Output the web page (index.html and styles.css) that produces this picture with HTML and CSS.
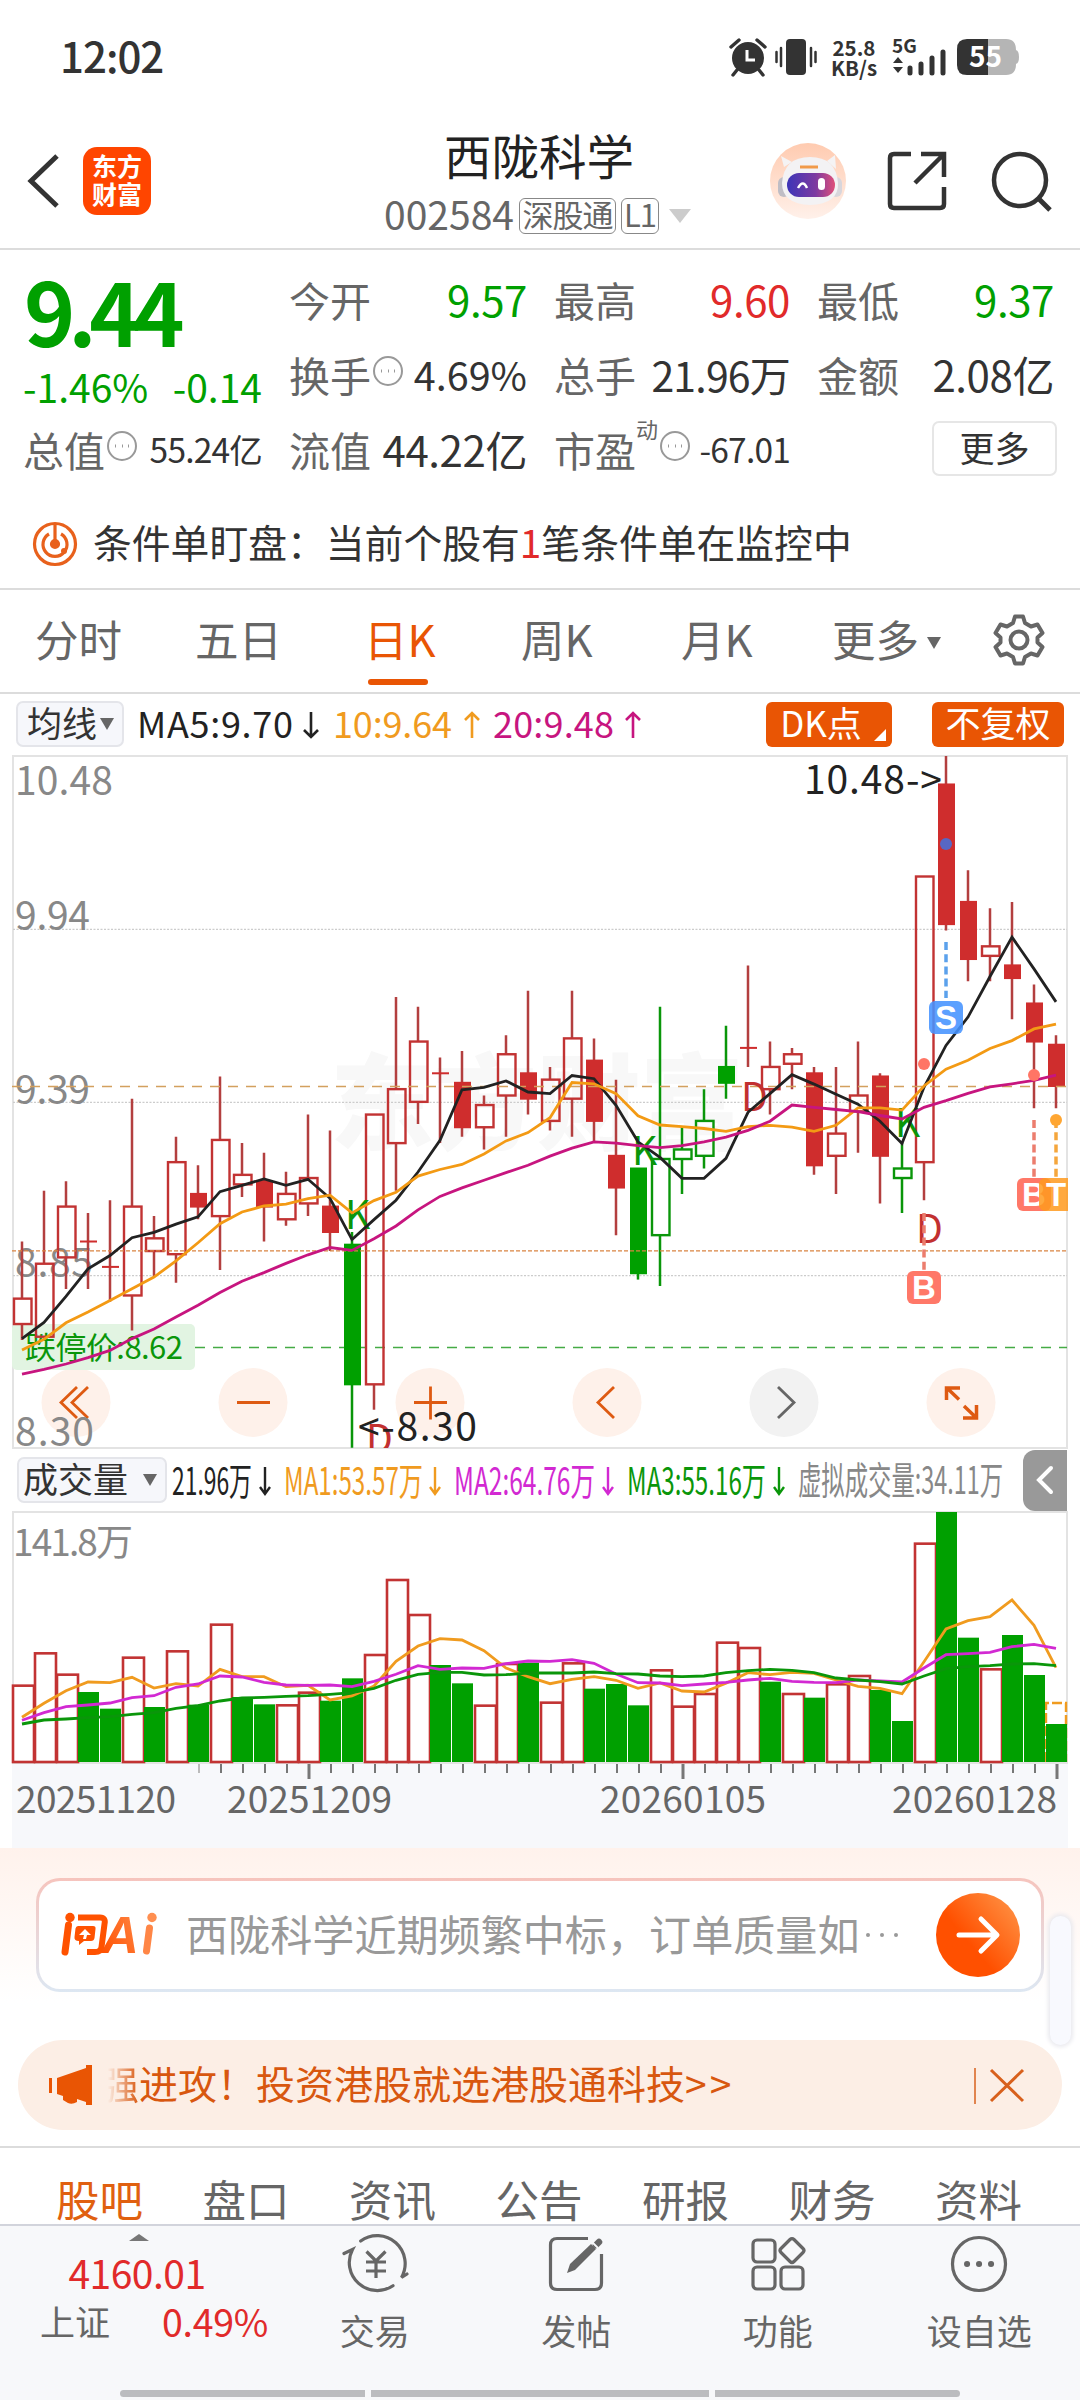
FILE: index.html
```html
<!DOCTYPE html>
<html lang="zh-CN">
<head>
<meta charset="utf-8">
<title>西陇科学 002584</title>
<link rel="stylesheet" href="styles.css">
</head>
<body>
<div class="phone">
  <header class="status">
    <span class="clock">12:02</span>
    <div class="status-icons">
      <svg width="40" height="38" viewBox="0 0 40 38"><circle cx="20" cy="20" r="16" fill="#333"/><path d="M3 9 L11 2 M37 9 L29 2 M9 32 L5 37 M31 32 L35 37" stroke="#333" stroke-width="3.4" stroke-linecap="round"/><path d="M19 12v10h8" fill="none" stroke="#fff" stroke-width="3"/></svg>
      <svg width="44" height="38" viewBox="0 0 44 38"><rect x="12" y="1" width="20" height="36" rx="4" fill="#333"/><path d="M7 10v18M2.500 14v10M37 10v18M41.500 14v10" stroke="#333" stroke-width="2.500" stroke-linecap="round"/></svg>
      <span class="speed">25.8<br>KB/s</span>
      <svg width="56" height="40" viewBox="0 0 56 40"><text x="0" y="16" class="net">5G</text><path d="M1 26l5-6 5 6zM1 30l5 6 5-6z" fill="#333"/><path d="M18 36v-5M29 36v-9M40 36v-15M51 36v-21" stroke="#333" stroke-width="5" stroke-linecap="round"/></svg>
      <svg width="64" height="38" viewBox="0 0 64 38"><path d="M11 1H32V37H11Q1 37 1 27V11Q1 1 11 1z" fill="#333"/><path d="M32 1H50Q60 1 60 12Q63 13 63 19T60 26Q60 37 50 37H32z" fill="#b5b5b5"/><text x="13" y="29" class="battery">55</text></svg>
    </div>
  </header>

  <div class="header">
    <div class="header-side">
      <svg width="34" height="56" viewBox="0 0 34 56"><path d="M31 3L5 28l26 25" fill="none" stroke="#333" stroke-width="5"/></svg>
      <div class="logo">东方<br>财富</div>
    </div>
    <div class="header-mid">
      <h1>西陇科学</h1>
      <div class="code"><span>002584</span><b class="tag tag-wide">深股通</b><b class="tag">L1</b><i class="tri tri-light"></i></div>
    </div>
    <div class="header-side header-actions">
      <svg class="robot" width="76" height="76" viewBox="0 0 76 76">
        <defs><linearGradient id="skin" x2="0" y2="1"><stop stop-color="#ffcbb0"/><stop offset="1" stop-color="#fff1ea"/></linearGradient><linearGradient id="visor"><stop stop-color="#3d35b8"/><stop offset=".6" stop-color="#7d3aa0"/><stop offset="1" stop-color="#e0507a"/></linearGradient></defs>
        <circle cx="38" cy="38" r="38" fill="url(#skin)"/>
        <path d="M14 24L11 13l11 6zM57 18l8-6 1 14z" fill="#f5f3f4"/>
        <rect x="8" y="34" width="12" height="20" rx="6" fill="#bfbdc5"/><rect x="60" y="34" width="12" height="20" rx="6" fill="#d8d6dc"/>
        <path d="M12 40Q14 14 40 14T68 40Q69 61 40 62Q12 61 12 40z" fill="#f3f2f4"/>
        <rect x="17" y="30" width="48" height="24" rx="12" fill="url(#visor)"/>
        <path d="M30 24h18" stroke="#f19a4a" stroke-width="3"/>
        <path d="M28 45q5-9 9 0" fill="none" stroke="#fff" stroke-width="2.500"/><rect x="48" y="35" width="7" height="12" rx="3.500" fill="#fff"/>
      </svg>
      <svg width="62" height="62" viewBox="0 0 62 62"><path d="M25 4H8Q4 4 4 8V54Q4 58 8 58H54Q58 58 58 54V37M35 4H58V27M57 5L29 33" fill="none" stroke="#333" stroke-width="4.500"/></svg>
      <svg width="62" height="62" viewBox="0 0 62 62"><circle cx="30" cy="30" r="26" fill="none" stroke="#333" stroke-width="4.500"/><path d="M48 48L60 60" stroke="#333" stroke-width="5"/></svg>
    </div>
  </div>

  <section class="quote">
    <div class="last green">
      <div class="price">9.44</div>
      <div class="change"><span>-1.46%</span><span>-0.14</span></div>
    </div>
    <div class="cell"><label>今开</label><b class="green">9.57</b></div>
    <div class="cell"><label>最高</label><b class="red">9.60</b></div>
    <div class="cell"><label>最低</label><b class="green">9.37</b></div>
    <div class="cell"><label>换手</label><svg class="dots" viewBox="0 0 32 32"><circle cx="16" cy="16" r="14"/><path d="M9 16h1M16 16h1M22 16h1"/></svg><b class="mid">4.69%</b></div>
    <div class="cell"><label>总手</label><b class="volume">21.96万</b></div>
    <div class="cell"><label>金额</label><b>2.08亿</b></div>
    <div class="cell"><label>总值</label><svg class="dots" viewBox="0 0 32 32"><circle cx="16" cy="16" r="14"/><path d="M9 16h1M16 16h1M22 16h1"/></svg><b class="small">55.24亿</b></div>
    <div class="cell"><label>流值</label><b>44.22亿</b></div>
    <div class="cell"><label>市盈</label><sup>动</sup><svg class="dots" viewBox="0 0 32 32"><circle cx="16" cy="16" r="14"/><path d="M9 16h1M16 16h1M22 16h1"/></svg><b class="small">-67.01</b></div>
    <div class="cell cell-more"><span class="more">更多</span></div>
  </section>

  <div class="notice">
    <svg width="46" height="46" viewBox="0 0 46 46" fill="none" stroke="#e8611c" stroke-width="3.200"><circle cx="23" cy="23" r="20.500"/><path d="M17 13A12 12 0 1 0 29 13"/><path d="M23 3v18"/><circle cx="23" cy="23" r="3.500" fill="#e8611c"/><circle cx="32" cy="30" r="3" fill="#e8611c" stroke="none"/></svg>
    <p>条件单盯盘：当前个股有<em>1</em>笔条件单在监控中</p>
  </div>

  <nav class="periods">
    <span>分时</span><span>五日</span><span class="on">日K</span><span>周K</span><span>月K</span><span class="has-tri">更多<i class="tri tri-small"></i></span>
    <svg width="54" height="54" viewBox="0 0 54 54" fill="none" stroke="#666" stroke-width="4" stroke-linejoin="round"><path d="M23 3.500h8l2 6.500 6 3.500 6.500-2 5 8.500-5 4.500v5l5 4.500-5 8.500-6.500-2-6 3.500-2 6.500h-8l-2-6.500-6-3.500-6.500 2-5-8.500 5-4.500v-5l-5-4.500 5-8.500 6.500 2 6-3.500z"/><circle cx="27" cy="27" r="8.500"/></svg>
  </nav>

  <div class="legend">
    <span class="pill">均线<i class="tri tri-small"></i></span>
    <svg class="legend-text" width="520" height="60" viewBox="130 694 520 60">
      <text x="137" y="738" textLength="156" fill="#222">MA5:9.70</text>
      <text x="333" y="738" textLength="119" fill="#f09b1f">10:9.64</text>
      <text x="493" y="738" textLength="121" fill="#c7157f">20:9.48</text>
      <g fill="none" stroke-width="2.600"><path stroke="#222" d="M311 712v25M304 730l7 7 7-7"/><path stroke="#f09b1f" d="M472 738v-25M465 720l7-7 7 7"/><path stroke="#c7157f" d="M633 738v-25M626 720l7-7 7 7"/></g>
    </svg>
    <span class="btn btn-dk">DK点<i class="corner"></i></span>
    <span class="btn btn-adj">不复权</span>
  </div>

  <svg class="chart" id="price" width="1080" height="695" viewBox="0 754 1080 695">
    <defs><clipPath id="frame"><rect x="12" y="755" width="1056" height="693"/></clipPath></defs>
    <text class="watermark" x="330" y="1142" textLength="414">东方财富</text>
    <path d="M13 1448V756H1067V1448z" fill="none" stroke="#e3e3e3" stroke-width="2"/>
    <path d="M13 929.300H1067M13 1102.300H1067M13 1275.700H1067" stroke="#ccc" stroke-width="1.200" stroke-dasharray="2 1.500"/>
    <path d="M12 1347.500H1067" stroke="#45ab45" stroke-width="1.500" stroke-dasharray="10 8" stroke-dashoffset="-3"/>
    <g class="axis">
      <text x="15" y="795" textLength="98">10.48</text><text x="15" y="930" textLength="75">9.94</text><text x="15" y="1104" textLength="75">9.39</text><text x="15" y="1277" textLength="78">8.85</text>
    </g>
    <g id="buttons">
      <g fill="#fef1ea"><circle cx="76" cy="1402.500" r="34.500"/><circle cx="253" cy="1402.500" r="34.500"/><circle cx="430" cy="1402.500" r="34.500"/><circle cx="607" cy="1402.500" r="34.500"/><circle cx="784" cy="1402.500" r="34.500" fill="#f2f2f2"/><circle cx="961" cy="1402.500" r="34.500"/></g>
      <g fill="none" stroke="#de5a12" stroke-width="2.800">
        <path d="M77 1387L61 1402.500l16 15.500M88 1387l-16 15.500 16 15.500M237 1402.500h33M414 1402.500h33M430.500 1386.500v33M614 1387l-16 15.500 16 15.500"/>
        <path d="M778 1387l16 15.500-16 15.500" stroke="#666"/>
        <path stroke-width="3.500" d="M946.500 1400V1388H960M947 1388l12 11.500M964 1406l12 11.500M976.500 1405V1418H963"/>
      </g>
    </g>
    <rect x="12" y="1324" width="183" height="46" rx="5" fill="#e2f4e2"/>
    <text x="25" y="1359" class="limit" textLength="158">跌停价:8.62</text>
    <g class="axis"><text x="15" y="1446" textLength="79">8.30</text></g>
    <g id="candles" clip-path="url(#frame)"></g>
    <path d="M12 1086.500H1067" stroke="#d3a05e" stroke-width="1.500" stroke-dasharray="10 8"/>
    <path d="M12 1250.800H1067" stroke="#d98442" stroke-width="1.300" stroke-dasharray="4 2"/>
    <g class="signal" clip-path="url(#frame)">
      <text class="g" x="345" y="1229">K</text><text class="g" x="632" y="1165">K</text><text class="g" x="895" y="1137">K</text>
      <text class="r" x="366" y="1453">D</text><text class="r" x="741" y="1111">D</text><text class="r" x="916" y="1243">D</text>
    </g>
    <g id="averages"></g>
    <g class="note"><text x="804" y="794" textLength="138">10.48-&gt;</text><text x="358" y="1441" textLength="119">&lt;-8.30</text></g>
    <g stroke-width="3.500" stroke-dasharray="8 4.200">
      <path d="M946 942v56" stroke="#5ba1ec"/><path d="M924 1213v57M1034 1120v57" stroke="#ec7d6e"/><path d="M1056 1120v57" stroke="#f5a63c"/>
    </g>
    <circle cx="946" cy="844" r="6" fill="#5767c4"/><circle cx="924" cy="1064" r="6" fill="#ff7565"/><circle cx="1034" cy="1075" r="6" fill="#ff7565"/><circle cx="1056" cy="1120" r="6" fill="#ffa632"/>
    <g class="flags" clip-path="url(#frame)">
      <rect x="929" y="1001" width="34" height="33" rx="6" fill="#4693ff" fill-opacity=".88"/><text x="946" y="1029">S</text>
      <rect x="907" y="1271" width="34" height="33" rx="6" fill="#ff7868"/><text x="924" y="1299">B</text>
      <rect x="1017" y="1178" width="34" height="33" rx="6" fill="#ff7868"/><text x="1034" y="1206">B</text>
      <rect x="1039" y="1178" width="34" height="33" rx="6" fill="#ff9a1e" fill-opacity=".85"/><text x="1056" y="1206">T</text>
    </g>
  </svg>

  <div class="legend legend-vol">
    <span class="pill pill-vol">成交量<i class="tri tri-small"></i></span>
    <svg class="legend-text" width="850" height="60" viewBox="168 1450 850 60">
      <g font-size="38"><text x="172" y="1495" textLength="80" lengthAdjust="spacingAndGlyphs" fill="#222">21.96万</text>
      <text x="284" y="1495" textLength="139" lengthAdjust="spacingAndGlyphs" fill="#f09b1f">MA1:53.57万</text>
      <text x="454" y="1495" textLength="141" lengthAdjust="spacingAndGlyphs" fill="#d229d2">MA2:64.76万</text>
      <text x="627" y="1495" textLength="139" lengthAdjust="spacingAndGlyphs" fill="#0a960a">MA3:55.16万</text>
      <text x="798" y="1494" textLength="205" lengthAdjust="spacingAndGlyphs" fill="#888">虚拟成交量:34.11万</text></g>
      <g fill="none" stroke-width="2.400"><path stroke="#222" d="M265 1467v27M260 1487l5 7 5-7"/><path stroke="#f09b1f" d="M435 1467v27M430 1487l5 7 5-7"/><path stroke="#d229d2" d="M608 1467v27M603 1487l5 7 5-7"/><path stroke="#0a960a" d="M779 1467v27M774 1487l5 7 5-7"/></g>
    </svg>
    <span class="fold"><svg width="20" height="30" viewBox="0 0 20 30"><path d="M16 3L4 15l12 12" fill="none" stroke="#fff" stroke-width="4" stroke-linecap="round"/></svg></span>
  </div>

  <svg class="chart" width="1080" height="337" viewBox="0 1511 1080 337">
    <rect x="12" y="1763" width="1056" height="85" fill="#f7f8fb"/>
    <path d="M13 1763V1512H1067V1763z" fill="#fff" stroke="#e3e3e3" stroke-width="2"/>
    <text class="vol-max" x="13" y="1556" textLength="120">141.8万</text>
    <g id="volume"></g>
    <g class="dates"><text x="16" y="1813" textLength="160">20251120</text><text x="227" y="1813" textLength="165">20251209</text><text x="600" y="1813" textLength="166">20260105</text><text x="892" y="1813" textLength="165">20260128</text></g>
  </svg>

  <section class="ai">
    <div class="ask">
      <svg width="100" height="50" viewBox="0 0 100 50"><defs><linearGradient id="brand" gradientUnits="userSpaceOnUse" x1="40" y1="40" x2="96" y2="10"><stop stop-color="#ff5000"/><stop offset="1" stop-color="#ff9355"/></linearGradient></defs><g fill="none" stroke="#ff5200" stroke-width="6"><path d="M8.500 15L5 42" stroke-width="7" stroke-linecap="round"/><path d="M18 7.500H40Q46 7.500 44.500 14L41.500 37Q41 42 35 42H27"/></g><circle cx="10" cy="7.500" r="4.700" fill="#ff5200"/><path d="M18 16H33Q36 16 35.500 19L34.500 28Q34 31 31 31H24L19 35V31Q14 31 14.500 27L15.500 18.500Q16 16 18 16z" fill="#ff5200"/><path d="M25 19l6 6h-4l-1 4h-3l1-4h-5z" fill="#fff"/><text class="brand-text" x="42" y="43" fill="url(#brand)">A</text><path d="M89.500 18L86.500 41" stroke="#ff8646" stroke-width="7" stroke-linecap="round"/><circle cx="92" cy="7.500" r="4.700" fill="#ff8f50"/></svg>
      <p>西陇科学近期频繁中标，订单质量如</p>
      <i class="ellipsis"></i>
      <span class="go"><svg width="44" height="44" viewBox="0 0 44 44"><path d="M3 22H40M25 6L41 22 25 38" fill="none" stroke="#fff" stroke-width="5" stroke-linecap="round" stroke-linejoin="round"/></svg></span>
    </div>
    <div class="scroll-thumb"></div>
  </section>

  <div class="banner">
    <svg width="46" height="42" viewBox="0 0 46 42" fill="#e95504"><path d="M1 14h3v15H1zM9 14L38 4V1h6v40h-6v-3l-9-3v3q-5 3-9 1l-5-3v-4l-6-2z"/></svg>
    <p><span class="faded">强</span>进攻！投资港股就选港股通科技<span class="arrows">&gt;&gt;</span></p>
    <svg class="close" width="52" height="40" viewBox="0 0 52 40" fill="none" stroke="#d8601c"><path d="M2 3v36" stroke-width="1.500"/><path d="M18 5l32 31M50 5L18 36" stroke-width="3"/></svg>
  </div>

  <nav class="sections"><span class="on">股吧</span><span>盘口</span><span>资讯</span><span>公告</span><span>研报</span><span>财务</span><span>资料</span></nav>

  <footer class="bottom">
    <div class="index"><i class="up"></i><b>4160.01</b><div><label>上证</label><em>0.49%</em></div></div>
    <div class="tool"><svg viewBox="0 0 66 60" fill="none" stroke="#666" stroke-width="3.200" stroke-linecap="round"><path d="M18.700 8A28 28 0 0 1 59.500 44.500L65 41M51 52.700A28 28 0 0 1 10.500 16.500L2 20.500"/><path d="M24.500 18.500l9.500 9.500 9.500-9.500M24 29h20M24 38h20M34 29v16" stroke-linecap="butt"/></svg><span>交易</span></div>
    <div class="tool"><svg viewBox="0 0 66 60" fill="none" stroke="#666" stroke-width="3.200"><path d="M45 5.500H14Q7.500 5.500 7.500 12V50Q7.500 56.500 14 56.500H52Q58.500 56.500 58.500 50V21"/><path d="M24 40l3-9L48 11l5 5-21 21z" fill="#666" stroke="none"/><path d="M53 12l3-3" stroke-width="6.500" stroke-linecap="round"/><path d="M49 9l6 6" stroke="#f7f8fa" stroke-width="1.800"/></svg><span>发帖</span></div>
    <div class="tool"><svg viewBox="0 0 66 60" fill="none" stroke="#666" stroke-width="3.200"><rect x="8" y="7" width="22" height="22" rx="4"/><rect x="8" y="34" width="22" height="22" rx="4"/><rect x="36" y="34" width="22" height="22" rx="4"/><path d="M45 6.500q2-2 4 0l9 9q2 2 0 4l-9 9q-2 2-4 0l-9-9q-2-2 0-4z"/></svg><span>功能</span></div>
    <div class="tool"><svg viewBox="0 0 66 60" fill="none" stroke="#666" stroke-width="3.200"><circle cx="33" cy="31" r="26.500"/><path d="M21 31h.1M33 31h.1M45 31h.1" stroke-width="6" stroke-linecap="round"/></svg><span>设自选</span></div>
    <div class="home"><i></i><i></i><i></i></div>
  </footer>
</div>
<script src="chart.js"></script>
</body>
</html>
```
FILE: styles.css
```css
* { box-sizing: border-box; }
body { margin: 0; background: #fff; font-family: "Noto Sans CJK SC", sans-serif; color: #333; line-height: 1; }
svg { display: block; flex: none; overflow: visible; }
h1, p { margin: 0; font-weight: 400; }
b, em, i { font-weight: 400; font-style: normal; }
.phone { width: 1080px; height: 2400px; overflow: hidden; display: flex; flex-direction: column; }
.phone > * { flex: none; }
.green { color: #00a000; }
.red { color: #e12a2a; }

.tri { display: inline-block; border-style: solid; border-color: #666 transparent transparent; border-width: 12px 7.5px 0; }
.tri-light { border-color: #ccc transparent transparent; border-width: 14px 11px 0; margin-left: 10px; }

.status { height: 114px; padding: 0 60px; display: flex; align-items: center; justify-content: space-between; }
.clock { font-size: 42px; font-weight: 500; letter-spacing: -1px; padding-bottom: 4px; }
.status-icons { display: flex; align-items: center; }
.status-icons svg:nth-child(2) { margin-left: 6px; }
.speed { width: 54px; margin: 0 11px 0 9px; font-size: 20.5px; line-height: 20px; font-weight: 700; text-align: center; }
.net { font-size: 19px; font-weight: 700; fill: #333; }
.battery { font-size: 28px; font-weight: 700; fill: #fff; }
.status-icons svg:last-child { margin-left: 8px; }

.header { height: 136px; border-bottom: 2px solid #dcdcdc; display: flex; justify-content: space-between; padding: 0 28px 0 26px; }
.header-side { width: 290px; display: flex; align-items: center; }
.header-actions { justify-content: flex-end; gap: 40px; }
.header-actions svg:nth-child(2) { margin-right: 2px; }
.logo { width: 68px; height: 68px; margin-left: 23px; border-radius: 14px; background: #ff4500; color: #fff; font-size: 25px; font-weight: 700; line-height: 28px; padding-top: 4px; text-align: center; }
.header-mid { padding-top: 15px; display: flex; flex-direction: column; align-items: center; }
h1 { font-size: 47.5px; line-height: 52px; color: #222; }
.code { margin-top: 17px; display: flex; align-items: center; font-size: 39px; height: 36px; color: #666; margin-left: -3px; }
.code > span { margin-top: -5px; }
.tag { height: 36px; border: 1.5px solid #888; border-radius: 6px; font-size: 31px; line-height: 30px; width: 38px; text-align: center; margin-left: 5px; letter-spacing: -1px; white-space: nowrap; }
.tag-wide { width: 97px; }

.quote { height: 240px; padding: 11px 26px 0 24px; display: grid; grid-template-columns: 238px 237px 235px 236px; grid-auto-rows: 75px; column-gap: 28px; }
.last { grid-row: span 2; padding-left: 2px; }
.price { font-size: 87px; font-weight: 700; line-height: 90px; letter-spacing: -7.2px; margin: 3px 0 0 -2px; }
.change { display: flex; justify-content: space-between; font-size: 39px; line-height: 50px; margin: 7px 0 0 -3px; }
.cell { display: flex; align-items: center; white-space: nowrap; }
.cell label { font-size: 41px; color: #666; line-height: 70px; margin-left: -1px; }
.cell b { margin-left: auto; font-size: 42px; line-height: 70px; letter-spacing: -0.4px; }
.cell .mid { font-size: 39.5px; letter-spacing: 0; }
.cell .volume { font-size: 41px; letter-spacing: -0.8px; }
.cell .small { font-size: 33.5px; letter-spacing: -0.8px; }
.dots { width: 32px; height: 32px; margin: -6px 0 0 1px; fill: none; stroke: #999; stroke-width: 2; }
.dots path { stroke-width: 3; }
.cell sup { font-size: 22px; color: #666; align-self: flex-start; margin-top: 6px; line-height: 22px; }
.cell-more { justify-content: flex-end; margin-right: -3px; }
.more { width: 125px; height: 55px; border: 2px solid #e6e6e6; border-radius: 7px; font-size: 35px; line-height: 47px; text-align: center; }

.notice { height: 98px; padding: 9px 31px 0 32px; display: flex; align-items: center; gap: 15px; font-size: 38.8px; }
.notice p { margin-top: -5px; }
.notice em { color: #e12a2a; }

.periods { height: 106px; border-top: 2px solid #dcdcdc; border-bottom: 2px solid #dcdcdc; display: grid; grid-template-columns: 160px 169px 157px 160px 151px 160px 54px; align-items: center; padding-left: 35px; font-size: 43.5px; color: #666; }
.periods span { position: relative; line-height: 102px; height: 102px; margin-top: -4px; }
.periods svg { margin-top: -2px; }
.periods .on { color: #e95504; }
.periods .on::after { content: ""; position: absolute; left: 4px; bottom: 5px; width: 60px; height: 6px; border-radius: 3px; background: #e95504; }
.has-tri .tri { margin-left: 8px; vertical-align: 8px; }

.legend { height: 60px; display: flex; align-items: center; padding: 0 16px; }
.pill { width: 108px; height: 46px; background: #f6f7fb; border: 2px solid #e4e5ea; border-radius: 7px; font-size: 35px; line-height: 38px; padding-left: 9px; white-space: nowrap; }
.pill .tri { margin-left: 3px; vertical-align: 7px; }
.legend-text { margin-left: 6px; font-size: 36px; }
.btn { height: 45px; border-radius: 6px; background: #e95504; color: #fff; font-size: 35px; line-height: 39px; text-align: center; }
.btn-dk { position: relative; width: 126px; margin-left: 116px; padding-right: 16px; }
.btn-adj { width: 132px; margin-left: 40px; }
.corner { position: absolute; right: 6px; bottom: 6px; border-style: solid; border-width: 0 0 12px 12px; border-color: transparent transparent #fff; }

.axis text, .note text { font-size: 39px; fill: #888; }
.note text { fill: #222; }
.watermark { font-size: 104px; font-weight: 900; fill: #f8f8f8; }
.limit { font-size: 31px; fill: #0a960a; }
.signal text { font-size: 39px; }
.signal .g { fill: #0a960a; }
.signal .r { fill: #c23030; }
.flags text { font-family: "Liberation Sans", sans-serif; font-size: 33px; font-weight: 700; fill: #fff; text-anchor: middle; }
.vol-max { font-size: 37px; fill: #888; }
.dates text { font-size: 37px; fill: #666; }

.legend-vol { height: 62px; padding: 0 0 0 17px; }
.pill-vol { width: 150px; padding-left: 4px; }
.pill-vol .tri { margin-left: 15px; }
.legend-vol .legend-text { margin-left: 1px; }
.fold { width: 44px; height: 61px; margin-left: 5px; border-radius: 12px 0 0 12px; background: #999; display: flex; align-items: center; justify-content: center; }

.ai { position: relative; height: 192px; padding: 30px 36px 0; background: linear-gradient(#fff2ec, #fff 80%); }
.ask { height: 114px; border: 3px solid transparent; border-radius: 24px; background: linear-gradient(#fff, #fff) padding-box, linear-gradient(#f6c4bd, #dde7f2) border-box; display: flex; align-items: center; padding: 0 21px; }
.ask p { margin: -3px 0 0 26px; font-size: 42.1px; color: #999; white-space: nowrap; }
.ellipsis { width: 4px; height: 4px; margin-left: 6px; border-radius: 50%; background: #999; box-shadow: 14px 0 #999, 28px 0 #999; }
.brand-text { font-family: "Liberation Sans", sans-serif; font-size: 51px; font-weight: 700; font-style: italic; }
.go { margin-left: auto; width: 84px; height: 84px; border-radius: 50%; background: linear-gradient(50deg, #ff5000 40%, #ff9a4d); display: flex; align-items: center; justify-content: center; }
.scroll-thumb { position: absolute; left: 1050px; top: 68px; width: 21px; height: 129px; border-radius: 11px; background: #f8f9fe; box-shadow: 0 0 4px 2px #e9e9ee; }

.banner { height: 90px; margin: 0 18px; border-radius: 45px; background: #fceee5; color: #d8570f; display: flex; align-items: center; padding: 0 37px 0 30px; font-size: 39px; }
.banner p { margin: -5px 0 0 6px; white-space: nowrap; }
.banner .close { margin-left: auto; }
.arrows { letter-spacing: 3px; }
.faded { -webkit-mask-image: linear-gradient(90deg, transparent 20%, #000); mask-image: linear-gradient(90deg, transparent 20%, #000); }

.sections { margin-top: 16px; height: 78px; border-top: 2px solid #dcdcdc; display: flex; justify-content: space-between; padding: 0 58px 0 56px; font-size: 43.5px; line-height: 102px; color: #666; }
.sections .on { color: #e06010; }

.bottom { height: 176px; background: #f7f8fa; border-top: 2px solid #d2d4dc; display: grid; grid-template-columns: 274px repeat(4, 201.500px); position: relative; color: #666; }
.index { display: flex; flex-direction: column; align-items: center; }
.up { border-style: solid; border-color: transparent transparent #777; border-width: 0 10px 7px; margin: 8px 0 9px 3px; }
.index b { font-size: 39px; line-height: 44px; color: #e12a2a; letter-spacing: -0.5px; }
.index div { display: flex; justify-content: space-between; width: 228px; margin: 5px 0 0 34px; line-height: 44px; font-size: 35px; }
.index em { font-size: 37.5px; color: #e12a2a; letter-spacing: -0.3px; }
.tool { display: flex; flex-direction: column; align-items: center; font-size: 35px; }
.tool svg { width: 66px; height: 60px; margin-top: 7px; }
.tool span { margin-top: 19px; }
.home { position: absolute; left: 120px; bottom: 3px; width: 840px; height: 7px; display: grid; grid-template-columns: 245px 338px 245px; gap: 6px; border-radius: 4px; overflow: hidden; }
.home i { background: #bbbcbf; }
```
FILE: chart.js
```js
const NS = 'http://www.w3.org/2000/svg';
const RED = '#c23333', GREEN = '#0a960a';

function add(parent, name, attrs) {
  const el = document.createElementNS(NS, name);
  for (const key in attrs) el.setAttribute(key, attrs[key]);
  parent.appendChild(el);
}

const xAt = i => 22 + i * 22;
const yPrice = cents => 755.9 + (1048 - cents) * 3.1739;

// kind, high, body top, body bottom, low (cents). r: hollow red, R: solid red, g: hollow green, G: solid green
const candles = `r 895 877 869 864|r 911 888 865 865|r 914 906 890 880|R 904 895 895 880|R 908 887 887 876|r 940 906 878 867|r 903 896 892 884|r 928 920 891 882|R 919 910 906 902|r 947 927 903 886|r 926 916 913 909|R 923 914 906 895|r 917 910 902 900|r 935 915 907 903|R 930 906 898 892|G 898 894 850 830|r 935 935 850 842|r 972 943 926 911|r 969 958 939 932|R 953 948 948 926|R 955 945 931 928|r 941 938 931 924|r 960 954 941 928|R 974 948 940 935|r 950 946 933 930|r 974 959 940 928|R 959 952 933 926|R 946 922 912 897|G 918 918 885 883|g 969 921 897 881|g 931 924 921 910|g 943 933 922 918|G 963 950 945 940|R 982 956 956 950|r 958 950 943 935|r 956 954 951 943|R 950 948 919 916|r 950 929 922 910|r 958 941 936 923|R 948 947 922 907|g 926 918 915 904|r 1010 1010 920 908|R 1048 1039 995 993|R 1012 1002 984 977|r 1000 988 985 977|R 1002 982 978 965|R 976 970 958 937|R 960 957 944 937`.split('|');

const candleLayer = document.getElementById('candles');
candles.forEach((row, i) => {
  const [kind, ...prices] = row.split(' ');
  const [high, top, bottom, low] = prices.map(p => yPrice(+p));
  const x = xAt(i);
  const red = kind.toLowerCase() === 'r';
  const color = red ? RED : GREEN;
  add(candleLayer, 'path', { d: `M${x} ${high}V${top}M${x} ${bottom}V${low}`, stroke: red ? '#b33f3f' : GREEN, 'stroke-width': 2.5 });
  if (kind === 'R' || kind === 'G') {
    add(candleLayer, 'rect', { x: x - 8, y: top - 1, width: 17, height: bottom - top + 2, fill: red ? '#cf2d2d' : '#00a000' });
  } else {
    add(candleLayer, 'rect', { x: x - 8, y: top, width: 17.5, height: bottom - top, fill: 'none', stroke: color, 'stroke-width': 2.4 });
  }
});

function line(parent, values, scale, color, width) {
  const points = values.split(' ').map((v, i) => `${xAt(i)},${scale(+v).toFixed(1)}`).join(' ');
  add(parent, 'polyline', { points, fill: 'none', stroke: color, 'stroke-width': width });
}

const averages = document.getElementById('averages');
line(averages, '864.4 869.5 877.7 886.4 890.6 896.2 897.9 900.5 902.8 910.7 912.7 914.7 912.7 914.6 908.6 895.6 901.9 908 916.9 926.9 942.8 943.6 945.6 942.1 941.6 947.3 946.3 937.9 926.4 921.5 914.9 914.9 921.2 935.7 941.6 947.6 944.6 941.4 938.3 932.9 925.9 943.6 956.8 965.7 978.5 990.9 980.9 970.5', yPrice, '#222', 2.8);
line(averages, '860.8 864.2 869.4 872.8 876.4 880.1 883.8 888.9 894.6 900.6 904.3 906.2 906.8 908.5 909.6 904 907.9 910.5 915.6 917.7 919.3 922.6 926.7 929.3 934 945.1 944.7 941.6 934.6 931.7 931.2 930.6 929.7 931.2 931.6 931 929.7 931.6 937.1 937.1 936.4 944 949.3 952.1 955.8 958.3 962 963.5', yPrice, '#f39a14', 2.8);
line(averages, '853.2 854.7 856.4 858.4 860.7 864.4 867.4 871.2 874.9 878.9 882.5 885.2 888.1 890.8 893.1 892.2 895.9 899.9 905 909.2 911.9 914.3 916.7 919 921.9 924.4 926.4 926 925.2 924.6 925.2 926.4 927.9 930 932.9 938 937.3 936.6 935.9 934.7 933.6 937.3 939.4 941.7 943.7 944.7 945.8 947.4', yPrice, '#c7157f', 2.8);

// bar tops, in thirds of a pixel below y = 1440
const volumes = 'r737 r640 r704 g756 g806 r653 g801 r634 g794 r554 g771 g793 r796 r758 g782 g715 r645 r420 r525 g675 g730 r797 r672 g668 r788 r670 g746 g732 g796 r691 r800 r762 r608 r624 g725 r762 g773 r733 r708 g750 g843 r311 g216 g593 r688 g585 g705 g852'.split(' ');
const yVol = v => 1440 + v / 3;
const volume = document.getElementById('volume');
add(volume, 'path', { d: 'M1046 1762V1703H1066V1762', fill: 'none', stroke: '#f09b1f', 'stroke-width': 2.4, 'stroke-dasharray': '10 3' });
volumes.forEach((item, i) => {
  const x = xAt(i), top = yVol(+item.slice(1));
  if (item[0] === 'g') {
    add(volume, 'rect', { x: x - 10, y: top, width: 21, height: 1762 - top, fill: '#00a000' });
  } else {
    add(volume, 'rect', { x: x - 9, y: top, width: 21, height: 1762 - top, fill: 'none', stroke: RED, 'stroke-width': 2.6 });
  }
  if (i >= 8) {
    const major = i === 13 || i === 30 || i === 47;
    add(volume, 'path', { d: `M${x + 1} 1764V${major ? 1779 : 1773}`, stroke: i === 8 ? '#bbb' : '#777', 'stroke-width': major ? 3 : 2 });
  }
});
line(volume, '832 790 752 726 728 712 744 731 738 688 710 710 740 736 780 768 738 664 618 596 600 632 684 710 731 718 710 721 745 729 753 756 730 698 704 697 700 720 739 745 761 665 567 542 530 480 556 683', yVol, '#f09b1f', 2.8);
line(volume, '841 818 800 795 789 773 767 742 732 708 711 727 735 736 735 740 724 703 677 688 684 685 671 663 664 659 670 702 728 729 737 732 727 720 715 724 727 728 720 723 726 684 644 641 637 620 613 625', yVol, '#d229d2', 2.8);
line(volume, '852 840 837 833 830 823 818 805 797 783 774 772 769 767 763 758 745 721 703 697 697 705 704 699 699 699 696 701 702 708 710 708 698 692 688 691 698 714 720 725 732 708 686 680 677 672 671 677', yVol, GREEN, 2.8);
```
